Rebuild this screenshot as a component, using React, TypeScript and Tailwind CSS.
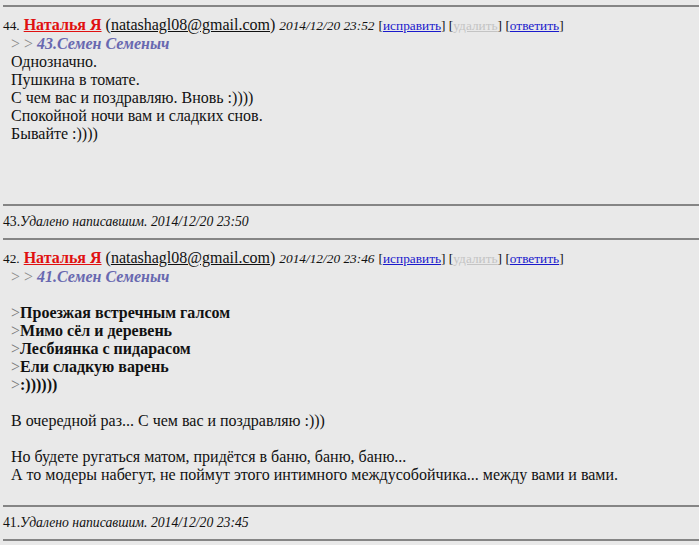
function Rule() {
  return <div className="ml-[3px] h-[2px] bg-[#858585]" />;
}

function Header({ num, time }: { num: number; time: string }) {
  return (
    <div className="flex items-baseline whitespace-nowrap pl-[3px] text-[16px] leading-[18px] text-[#111]">
      <span className="text-[13.33px]">{num}.</span>
      <a className="ml-[4px] font-bold text-[#e01010] underline">Наталья Я</a>
      <span className="ml-[4px]">
        (<span className="underline">natashagl08@gmail.com</span>)
      </span>
      <span className="ml-[4px] text-[13.33px] italic">2014/12/20 {time}</span>
      <span className="ml-[4px] text-[13.33px]">
        [<a className="text-[#1a1acc] underline">исправить</a>] [
        <a className="text-[#c4c4c4] underline">удалить</a>] [
        <a className="text-[#1a1acc] underline">ответить</a>]
      </span>
    </div>
  );
}

function ReplyTo({ label }: { label: string }) {
  return (
    <div className="pl-[11px]">
      <span className="text-[#8a8a8a]">&gt; &gt; </span>
      <span className="font-bold italic text-[#6868b0]">{label}</span>
    </div>
  );
}

function Deleted({ num, time }: { num: number; time: string }) {
  return (
    <div className="py-[7px] pl-[3px] text-[13.7px] leading-[18px] text-[#111]">
      {num}.<span className="italic">Удалено написавшим. 2014/12/20 {time}</span>
    </div>
  );
}

export default function App() {
  return (
    <div
      className="min-h-[545px] bg-[#e9e9e9] pt-[5px] text-[16px] leading-[18px] text-[#111]"
      style={{ fontFamily: "'Liberation Serif', Tinos, 'DejaVu Serif', serif" }}
    >
      <Rule />
      <div className="pt-[9px] pb-[61px]">
        <Header num={44} time="23:52" />
        <ReplyTo label="43.Семен Семеныч" />
        <div className="pl-[11px]">
          <div>Однозначно.</div>
          <div>Пушкина в томате.</div>
          <div>С чем вас и поздравляю. Вновь :))))</div>
          <div>Спокойной ночи вам и сладких снов.</div>
          <div>Бывайте :))))</div>
        </div>
      </div>
      <Rule />
      <Deleted num={43} time="23:50" />
      <Rule />
      <div className="pt-[9px] pb-[21px]">
        <Header num={42} time="23:46" />
        <ReplyTo label="41.Семен Семеныч" />
        <div className="pl-[11px]">
          <div className="h-[18px]" />
          {["Проезжая встречным галсом", "Мимо сёл и деревень", "Лесбиянка с пидарасом", "Ели сладкую варень", ":))))))"].map((l) => (
            <div key={l}>
              <span className="text-[#777]">&gt;</span>
              <b>{l}</b>
            </div>
          ))}
          <div className="h-[18px]" />
          <div>В очередной раз... С чем вас и поздравляю :)))</div>
          <div className="h-[18px]" />
          <div>Но будете ругаться матом, придётся в баню, баню, баню...</div>
          <div>А то модеры набегут, не поймут этого интимного междусобойчика... между вами и вами.</div>
        </div>
      </div>
      <Rule />
      <Deleted num={41} time="23:45" />
      <Rule />
    </div>
  );
}
